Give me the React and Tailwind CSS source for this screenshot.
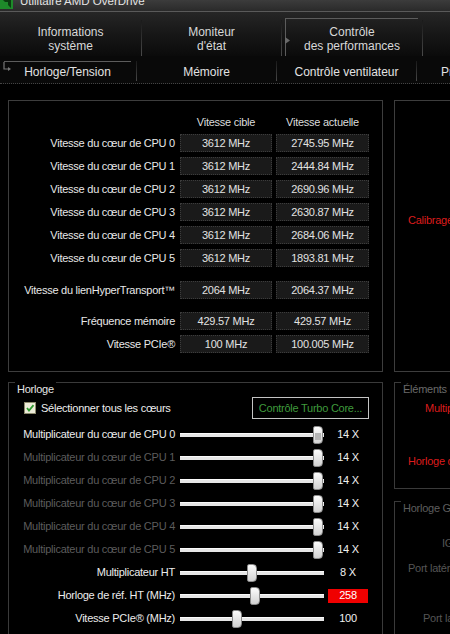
import clsx from 'clsx';

const speedRows = [
  ['Vitesse du cœur de CPU 0', '3612 MHz', '2745.95 MHz'],
  ['Vitesse du cœur de CPU 1', '3612 MHz', '2444.84 MHz'],
  ['Vitesse du cœur de CPU 2', '3612 MHz', '2690.96 MHz'],
  ['Vitesse du cœur de CPU 3', '3612 MHz', '2630.87 MHz'],
  ['Vitesse du cœur de CPU 4', '3612 MHz', '2684.06 MHz'],
  ['Vitesse du cœur de CPU 5', '3612 MHz', '1893.81 MHz'],
];

const sliders = [
  { label: 'Multiplicateur du cœur de CPU 0', pos: 'left-[133px]', value: '14 X', focus: true },
  { label: 'Multiplicateur du cœur de CPU 1', pos: 'left-[133px]', value: '14 X', dim: true },
  { label: 'Multiplicateur du cœur de CPU 2', pos: 'left-[133px]', value: '14 X', dim: true },
  { label: 'Multiplicateur du cœur de CPU 3', pos: 'left-[133px]', value: '14 X', dim: true },
  { label: 'Multiplicateur du cœur de CPU 4', pos: 'left-[133px]', value: '14 X', dim: true },
  { label: 'Multiplicateur du cœur de CPU 5', pos: 'left-[133px]', value: '14 X', dim: true },
  { label: 'Multiplicateur HT', pos: 'left-[67px]', value: '8 X' },
  { label: 'Horloge de réf. HT (MHz)', pos: 'left-[70px]', value: '258', red: true },
  { label: 'Vitesse PCIe® (MHz)', pos: 'left-[52px]', value: '100' },
];

const Cell = ({ children, className }) => (
  <div className={clsx('h-[18px] bg-[#1a1a1a] border border-dotted border-[#3c3c3c] flex items-center justify-center text-[#e2e2e2]', className)}>
    {children}
  </div>
);

const DataRow = ({ label, a, b, className }) => (
  <div className={clsx('flex items-center', className)}>
    <div className="w-[171px] pr-[5px] text-right text-[#e8e8e8] whitespace-nowrap">{label}</div>
    <Cell className="w-[92px]">{a}</Cell>
    <Cell className="w-[93px] ml-[4px]">{b}</Cell>
  </div>
);

const SliderRow = ({ label, pos, value, dim, red, focus }) => (
  <div className="flex items-center h-[23px]">
    <div className={clsx('w-[171px] pr-[5px] text-right whitespace-nowrap', dim ? 'text-[#5c5c5c]' : 'text-[#ececec]')}>{label}</div>
    <div className="relative w-[144px] h-[4px] bg-[#e6e6e6] border-t border-[#fafafa]">
      <div className={clsx('absolute top-1/2 -translate-y-1/2 w-[10px] h-[18px] rounded-[2px] rounded-r-[4px] border border-[#8a8a8a] bg-linear-to-b from-[#fcfcfc] to-[#d2d2d2] flex items-end justify-center pb-[3px]', pos)}>
        {focus && <div className="w-[6px] h-[7px] bg-[#b4b4b4]" />}
      </div>
    </div>
    <div className="w-[40px] ml-[4px] flex justify-center">
      {red ? (
        <div className="w-[40px] h-[14px] bg-[#f00000] text-white flex items-center justify-center">{value}</div>
      ) : (
        <span className="text-[#f0f0f0]">{value}</span>
      )}
    </div>
  </div>
);

// group box header: the top border broken by its caption
const GroupHead = ({ title, color = 'text-[#e6e6e6]' }) => (
  <div className="flex h-[15px]">
    <div className="w-[6px] border-t border-[#3a3a3a]" />
    <span className={clsx('px-[2px] leading-[14px] whitespace-nowrap', color)}>{title}</span>
    <div className="flex-1 border-t border-[#3a3a3a]" />
  </div>
);

const Separator = ({ className }) => (
  <div className={clsx('w-px shrink-0 bg-linear-to-b from-[#1a1a1a] to-[#4a4a4a]', className)} />
);

export default function App() {
  return (
    <div className="w-[450px] h-[634px] overflow-hidden bg-black font-['Liberation_Sans',Arial,sans-serif] text-[11px] tracking-[-0.25px]">
      {/* title bar */}
      <div className="h-[12px] flex items-start overflow-hidden bg-linear-to-b from-[#3c3c3c] to-[#2a2a2a] border-b border-[#5a5a5a]">
        <svg width="14" height="11" viewBox="0 0 14 11" className="shrink-0">
          <rect x="0" y="-3" width="13" height="12" fill="#1e8a2a" />
          <path d="M2 -1 L11 -1 L11 8 L8 5 L8 2 L5 2 Z" fill="#0b3d10" />
        </svg>
        <span className="ml-[6px] -mt-[7px] text-[11.5px] tracking-normal text-[#e4e4e4] whitespace-nowrap">Utilitaire AMD OverDrive</span>
      </div>

      {/* main tabs */}
      <div className="h-[44px] flex bg-linear-to-b from-[#262626] via-[#171717] to-[#0b0b0b] text-[12px] tracking-normal leading-[14px] text-[#d8d8d8]">
        <div className="w-[141px] shrink-0 pt-[13px] text-center">Informations<br />système</div>
        <Separator className="mt-[8px]" />
        <div className="w-[139px] shrink-0 pt-[13px] text-center">Moniteur<br />d'état</div>
        <Separator className="mt-[8px]" />
        <div className="w-[140px] shrink-0 pl-[3px] pt-[6px]">
          <div className="relative w-[133px] h-full border-t border-l border-[#5c5c5c] pt-[6px] text-center">
            <svg width="5" height="7" viewBox="0 0 5 7" className="absolute -left-[1px] top-[18px]">
              <path d="M0 0 L5 3.5 L0 7 Z" fill="#6a6a6a" />
            </svg>
            Contrôle<br />des performances
          </div>
        </div>
        <Separator className="mt-[8px]" />
        <div className="flex-1" />
      </div>

      {/* sub tabs */}
      <div className="h-[28px] flex bg-[#090909] border-b border-dotted border-[#444] text-[12px] tracking-normal text-[#e2e2e2]">
        <div className="w-[136px] shrink-0 pt-[5px] pl-[4px]">
          <div className="relative h-[20px] w-[127px] border-t border-[#5c5c5c] flex items-center justify-center">
            <svg width="8" height="12" viewBox="0 0 8 12" className="absolute -left-[1px] top-0">
              <path d="M1 0 L1 7 L6 7" stroke="#777" strokeWidth="1.2" fill="none" />
              <path d="M5 5 L8 7 L5 9 Z" fill="#777" />
            </svg>
            Horloge/Tension
          </div>
        </div>
        <Separator className="mt-[5px] mb-[2px]" />
        <div className="w-[139px] shrink-0 pt-[4px] h-full flex items-center justify-center">Mémoire</div>
        <Separator className="mt-[5px] mb-[2px]" />
        <div className="w-[139px] shrink-0 pt-[4px] h-full flex items-center justify-center whitespace-nowrap">Contrôle ventilateur</div>
        <Separator className="mt-[5px] mb-[2px]" />
        <div className="pl-[24px] pt-[4px] h-full flex items-center whitespace-nowrap">Profils</div>
      </div>

      {/* speeds */}
      <div className="flex pt-[16px] pl-[8px]">
        <div className="w-[375px] h-[272px] shrink-0 border border-[#3d3d3d] pt-[14px]">
          <div className="flex h-[14px] leading-[14px] text-[#dcdcdc]">
            <div className="w-[171px]" />
            <div className="w-[92px] text-center">Vitesse cible</div>
            <div className="w-[93px] ml-[4px] text-center">Vitesse actuelle</div>
          </div>
          <div className="flex flex-col gap-[5px] mt-[5px]">
            {speedRows.map(([l, a, b]) => (
              <DataRow key={l} label={l} a={a} b={b} />
            ))}
          </div>
          <DataRow className="mt-[14px]" label="Vitesse du lienHyperTransport™" a="2064 MHz" b="2064.37 MHz" />
          <DataRow className="mt-[13px]" label="Fréquence mémoire" a="429.57 MHz" b="429.57 MHz" />
          <DataRow className="mt-[5px]" label="Vitesse PCIe®" a="100 MHz" b="100.005 MHz" />
        </div>
        <div className="w-[160px] h-[272px] shrink-0 ml-[11px] border border-[#3d3d3d] pt-[112px] pl-[13px] leading-[14px] text-[#dc1c1c] whitespace-nowrap">
          Calibrage de la vitesse
        </div>
      </div>

      {/* clock */}
      <div className="flex pl-[8px] mt-[10px]">
        <div className="w-[375px] h-[260px] shrink-0 border-l border-r border-[#3a3a3a]">
          <GroupHead title="Horloge" />
          <div className="flex items-center h-[22px]">
            <svg width="12" height="12" viewBox="0 0 12 12" className="ml-[15px] shrink-0">
              <rect x="0.5" y="0.5" width="11" height="11" fill="#ecebd8" stroke="#8d8b6e" />
              <path d="M3 6 L5 8.5 L9.5 3.2" stroke="#2f9a2f" strokeWidth="1.8" fill="none" />
            </svg>
            <span className="ml-[5px] text-[#eeeeee] whitespace-nowrap">Sélectionner tous les cœurs</span>
            <div className="ml-auto mr-[13px] w-[117px] h-[22px] border border-[#c4c4c4] flex items-center justify-center text-[#3f9a3c] whitespace-nowrap">
              Contrôle Turbo Core...
            </div>
          </div>
          <div className="mt-[4px]">
            {sliders.map((s) => (
              <SliderRow key={s.label} {...s} />
            ))}
          </div>
        </div>
        <div className="w-[160px] shrink-0 ml-[11px]">
          <div className="h-[107px] border-l border-r border-b border-[#3a3a3a] leading-[14px]">
            <GroupHead title="Éléments de performance" color="text-[#6a6a6a]" />
            <div className="mt-[4px] pl-[30px] text-[#dc1c1c] whitespace-nowrap">Multiplicateur</div>
            <div className="mt-[39px] pl-[13px] text-[#dc1c1c] whitespace-nowrap">Horloge de réf.</div>
          </div>
          <div className="h-[140px] mt-[12px] border-l border-r border-[#3a3a3a] leading-[14px] text-[#555555]">
            <GroupHead title="Horloge GPU" color="text-[#5e5e5e]" />
            <div className="mt-[20px] pl-[47px] whitespace-nowrap">IGP</div>
            <div className="mt-[11px] pl-[13px] whitespace-nowrap">Port latéral</div>
            <div className="mt-[36px] pl-[28px] whitespace-nowrap">Port latéral</div>
          </div>
        </div>
      </div>
    </div>
  );
}
